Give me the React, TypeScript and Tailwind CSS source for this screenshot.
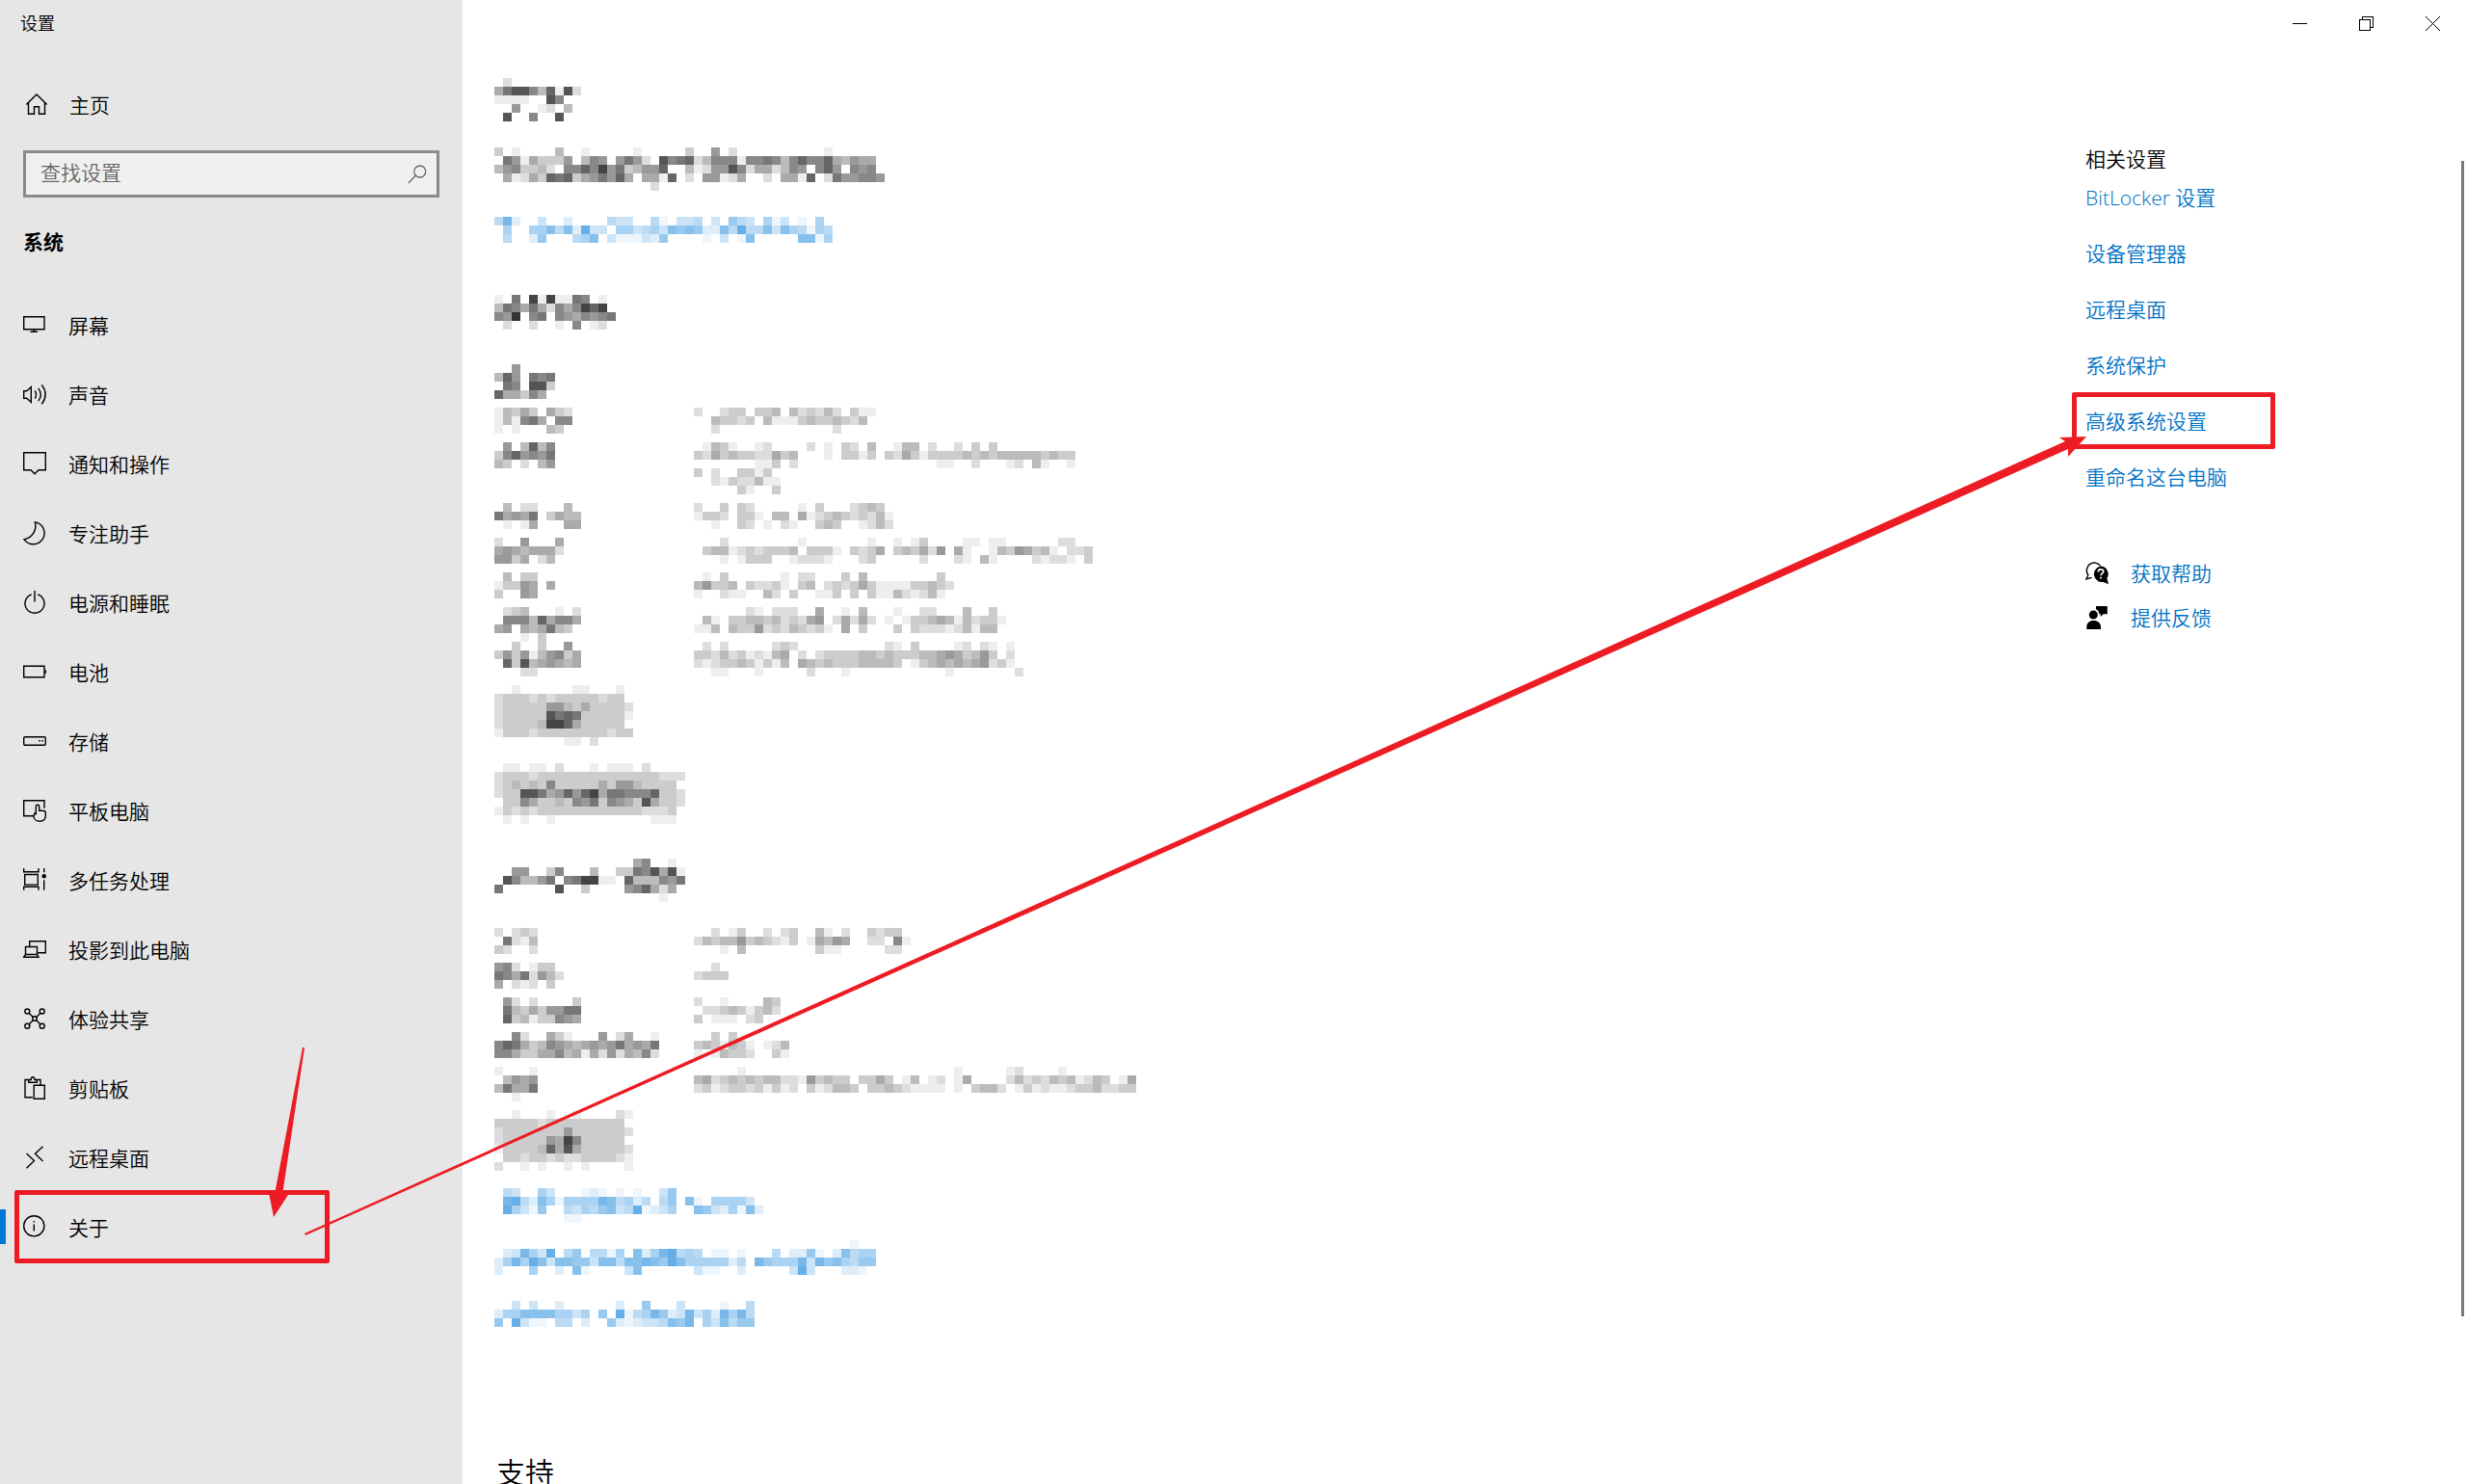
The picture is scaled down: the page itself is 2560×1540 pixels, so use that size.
import React from "react";

const CELL = 9;

type Rows = string[];

/* Pixelated stand-in for hidden text: each hex digit is the darkness of one cell. */
function Mosaic({ rows, tone = "gray" }: { rows: Rows; tone?: "gray" | "blue" }) {
  const cols = Math.max(...rows.map((r) => r.length));
  return (
    <svg
      role="img"
      aria-label="已隐藏"
      width={cols * CELL}
      height={rows.length * CELL}
      shapeRendering="crispEdges"
      className={tone === "blue" ? "block shrink-0 fill-[#0078d7]" : "block shrink-0 fill-black"}
    >
      {rows.map((row, y) =>
        row.split("").map((c, x) =>
          c === "0" ? null : (
            <rect key={`${x}-${y}`} x={x * CELL} y={y * CELL} width={CELL} height={CELL} opacity={parseInt(c, 16) / 15} />
          ),
        ),
      )}
    </svg>
  );
}

const pageTitle: Rows = ["02", "58aa7491a2", "111100a7", "006001204", "0a00700a"];
const summary: Rows = [
  "301000040010000010000030060200000000001",
  "08615333604760686" + "20a" + "7892477717" + "7874797795" + "4655",
  "46733420779" + "7b6834669" + "0041266a72" + "5524760796" + "0767",
  "051253989356869505519020661250020551902866776",
  "0000000000000000002",
];
const summaryLink: Rows = [
  "48200300200004330041033403064305130105",
  "050055747293305534537676227494473754154",
  "040026000457031113260000103017000007715",
];
const specTitle: Rows = ["1080b1b118701", "4875852757b9b", "76c07807657678", "0200200107012"];
const deviceTitle: Rows = ["006", "4960878", "0870aa3", "955375"];

const deviceRows: { label: Rows; value: Rows }[] = [
  {
    label: ["143530532", "141785077", "10100043"],
    value: ["200233033404232420311", "00433230411134334324", "00200000000000002"],
  },
  {
    label: ["0604947", "3796768", "4302046"],
    value: [
      "01431001200002010320400144020020303",
      "32534332253400010331303253133334343444443433",
      "00000001130200000000000000001100200012041001",
      "302003313",
      "0021322411",
      "0000031003",
    ],
  },
  {
    label: ["040220004", "8565803544", "0101500055"],
    value: ["2003032000001030002343", "13320331044051234323241", "00100320102100343001242"],
  },
  {
    label: ["20060005", "56545552", "6635024"],
    value: [
      "00020000000010000000100101300001101100000022",
      "0344123233340333103235034352605100143653410223",
      "0001013330012221000230000020002104100002122103",
    ],
  },
  {
    label: ["04033", "1336505", "30065"],
    value: ["01030000001022000304000000003", "463340322310340232353111133432", "10021100420300113030311421241"],
  },
  {
    label: ["0234000102", "0777495775", "560545843", "000103"],
    value: ["00000021022200500104000100220004003", "041033443423256025252010133454142331", "11404336232432310503000303222124144"],
  },
  {
    label: ["003003006", "3636146735", "093a456545", "00022"],
    value: [
      "0202000002320000000000210300001202101",
      "3324231214502023333443433344565346302",
      "2123343131405434333444430134545456231",
      "00110001000002000100000000000100000002",
    ],
  },
];

const copyButton: Rows = [
  "001000000110001",
  "233323233333233",
  "2333336643533332",
  "233333a898333331",
  "233334bb9533333",
  "1333233333333233",
  "000000001102",
];
const renameButton: Rows = [
  "011011020001011102",
  "2333233333333333333222",
  "234343733333536643333",
  "233aa856969b5887779332",
  "03375334376837653a5332",
  "132323333333333332223",
  "010100100000000000111",
];
const windowsTitle: Rows = [
  "000000000000000057001",
  "00660037000400338" + "7a5a1",
  "0a74468078bb1109444768",
  "8000000a0030000679525",
  "0000000000000000000100",
];

const windowsRows: { label: Rows; value: Rows }[] = [
  {
    label: ["20232", "08214", "32002"],
    value: ["002013002023004102003233", "2434463432130154650022071", "000104000000003110000022"],
  },
  { label: ["6720133", "87582642", "5021203"], value: ["002", "2333"] },
  {
    label: ["0620200003", "0843536688", "0934133765"],
    value: ["2001000043", "0223431342", "30111023"],
  },
  {
    label: ["0072005310006025001", "7985347654565685658", "7753355745152625472"],
    value: ["00303", "34314310124", "10143320031"],
  },
  {
    label: ["10001", "04656", "48558", "001"],
    value: [
      "0000010000000000000000000000001000001200001",
      "452343434422163433033530140120150000242324341243015",
      "231233231312031244303343211110103442013121123342233",
    ],
  },
];

const copyButton2: Rows = [
  "0010001001000021",
  "333332333333333",
  "2333333363333332",
  "23333365b733333",
  "13333495a5333332",
  "0332332322333321",
  "2001010010100001",
];

const footerLinks: Rows[] = [
  ["043005300012101010036", "089427515555874524046071055553", "0953160043546734912350076325172", "0000000011"],
  [
    "000000000000000000000000000000000000000001",
    "02385390460441507258945401101000402261027455",
    "25859737766377477876975555524086555838675466",
    "20005002071000037000000311002000003930002210",
  ],
  ["003030020000002006000300001004", "255777755350609145862383528584", "609311044020062123347680537466"],
];
const footerLinkSpacing = ["mt-[18px]", "mt-[18px]", "mt-[27px]"];

function Glyph({ children }: { children: React.ReactNode }) {
  return (
    <svg width="24" height="24" viewBox="0 0 24 24" fill="none" stroke="currentColor" strokeWidth="1.4" className="block shrink-0 overflow-visible" aria-hidden="true">
      {children}
    </svg>
  );
}

const navItems: { label: string; icon: React.ReactNode }[] = [
  { label: "屏幕", icon: <path d="M.7 3.7H22v13H.7zM11.3 16.7v2.6M7.5 19.3h7.5" /> },
  {
    label: "声音",
    icon: <path d="M.7 8.7h3L8.3 4.5v16L3.7 16.3h-3zM12.2 8.5q2.8 4 0 8M15.8 5.8q5 6.7 0 13.4M19.3 2.3q7.6 10 0 20" />,
  },
  { label: "通知和操作", icon: <path d="M.7.7h22.6v18H16l-4 4-4-4H.7z" /> },
  { label: "专注助手", icon: <path d="M12.3.9A11.5 11.5 0 1 1 1 18.6 14 14 0 0 0 12.3.9z" /> },
  { label: "电源和睡眠", icon: <path d="M12 0v11.5M8.8 3.8a10 10 0 1 0 6.4 0" /> },
  {
    label: "电池",
    icon: (
      <>
        <path d="M.7 6.3H22v11.4H.7z" />
        <path d="M22.5 10.3H24v3.4h-1.500z" fill="currentColor" stroke="none" />
      </>
    ),
  },
  {
    label: "存储",
    icon: (
      <>
        <rect x=".7" y="7.700" width="22.6" height="8.600" rx="1.2" />
        <path d="M16.300 11h1.700v1.500h-1.700zM19.300 11H21v1.500h-1.700z" fill="currentColor" stroke="none" />
      </>
    ),
  },
  {
    label: "平板电脑",
    icon: (
      <path d="M11 17.700H.7v-16H22v8M13.300 16.500V7.500q0-1.300 1.700-1.300t1.700 1.300v4.800q6.600-.5 6.600 1.700v3.500c0 3.500-2.300 5.800-6 5.800s-6.300-2.300-6.300-5.300q0-2.800 2.300-3.500" />
    ),
  },
  {
    label: "多任务处理",
    icon: (
      <>
        <path d="M.7 0v3.700H16V0M1.700 6.500H15.300v10.600H1.700zM.7 22.800v-3.500H16v3.500M21.700 0v4.300M21.700 12.300v10.500" />
        <circle cx="21.700" cy="8.300" r="2.200" fill="currentColor" stroke="none" />
      </>
    ),
  },
  {
    label: "投影到此电脑",
    icon: <path d="M6.700 9V3.700h16.600V15.700H15M2.500 17.500V9.500H14.500v8M2.500 17.500L.7 20.300H16l-1.500-2.800z" />,
  },
  {
    label: "体验共享",
    icon: (
      <>
        <circle cx="4.300" cy="4.500" r="2.500" />
        <circle cx="19.700" cy="4.500" r="2.500" />
        <circle cx="12" cy="12" r="2.300" />
        <circle cx="4.300" cy="19.700" r="2.500" />
        <circle cx="19.700" cy="19.700" r="2.500" />
        <path d="M6 6.200l4.300 4.200M18 6.200l-4.300 4.200M6 18l4.300-4.300M18 18l-4.300-4.300" />
      </>
    ),
  },
  {
    label: "剪贴板",
    icon: <path d="M9.800 21.800H2V3.500h3.800M14.300 3.500h3.700V9M5.800 6.300V3.500h2.500q0-2.800 1.800-2.800t1.800 2.800h2.400v2.800zM11.200 9.300H22.300V23.300H11.200z" />,
  },
  { label: "远程桌面", icon: <path d="M20.500.7l-8 7.600 8 7.600M3.500 7.900l8 7.600-8 7.800" /> },
  {
    label: "关于",
    icon: (
      <>
        <circle cx="11.300" cy="11.300" r="10.600" />
        <path d="M11.300 9.500v7M11.300 6v1.600" />
      </>
    ),
  },
];

const relatedLinks = ["BitLocker 设置", "设备管理器", "远程桌面", "系统保护", "高级系统设置", "重命名这台电脑"];

function DetailList({ rows }: { rows: { label: Rows; value: Rows }[] }) {
  return (
    <dl>
      {rows.map((row, i) => (
        <div key={i} className={row.value.length > 4 ? "flex h-[63px]" : "flex h-9"}>
          <dt className="w-[207px] shrink-0">
            <Mosaic rows={row.label} />
          </dt>
          <dd>
            <Mosaic rows={row.value} />
          </dd>
        </div>
      ))}
    </dl>
  );
}

function Sidebar() {
  return (
    <aside className="w-[480px] shrink-0 bg-[#e6e6e6]">
      <div className="flex h-12 items-center pl-[21px] text-lg">设置</div>
      <a href="#home" className="mt-9 flex h-[52px] items-center gap-[22px] pl-[26px]">
        <Glyph>
          <path d="M1.300 10.500L12 0l10.700 10.500M3.500 8.500V20.300H9.500v-7.600h5v7.600h6V8.500" />
        </Glyph>
        主页
      </a>
      <div className="mx-6 mt-5 flex h-[49px] items-center border-[3px] border-[#8a8a8a] bg-[#f0f0f0] pr-2.5 pl-[15px]">
        <input
          type="text"
          aria-label="查找设置"
          placeholder="查找设置"
          className="min-w-0 flex-1 bg-transparent pb-0.5 outline-none placeholder:text-[#666]"
        />
        <button type="button" aria-label="搜索" className="text-[#666]">
          <svg width="20" height="20" viewBox="0 0 20 20" fill="none" stroke="currentColor" strokeWidth="1.300" className="block">
            <circle cx="12.700" cy="7" r="6" />
            <path d="M8.300 11.300L.7 19" />
          </svg>
        </button>
      </div>
      <h2 className="mt-7 pl-6 leading-9 font-bold">系统</h2>
      <nav className="mt-8">
        <ul>
          {navItems.map((item, i) => {
            const active = i === navItems.length - 1;
            return (
              <li key={item.label} className="relative">
                <a href={`#nav-${i}`} aria-current={active ? "page" : undefined} className="flex h-[72px] items-center gap-[23px] pl-6">
                  <Glyph>{item.icon}</Glyph>
                  <span className="pt-[3px]">{item.label}</span>
                </a>
                {active && (
                  <>
                    <span className="absolute top-[18px] left-0 h-9 w-1.5 bg-[#0078d7]" />
                    <span className="absolute -inset-y-0.5 left-[15px] w-[327px] rounded-xs border-[5px] border-[#ed1c24]" />
                  </>
                )}
              </li>
            );
          })}
        </ul>
      </nav>
    </aside>
  );
}

function WindowControls() {
  const button = "flex h-12 w-[69px] items-center justify-center";
  return (
    <div className="flex justify-end pr-px">
      <button type="button" aria-label="最小化" className={button}>
        <svg width="15" height="15" stroke="black" fill="none" shapeRendering="crispEdges"><path d="M0 7.500h15" /></svg>
      </button>
      <button type="button" aria-label="还原" className={button}>
        <svg width="15" height="15" stroke="black" fill="none" shapeRendering="crispEdges"><path d="M.5 3.500h11v11H.5zM3.500 3.500v-3h11v11h-3" /></svg>
      </button>
      <button type="button" aria-label="关闭" className={button}>
        <svg width="15" height="15" stroke="black" fill="none"><path d="M0 0l15 15M15 0L0 15" /></svg>
      </button>
    </div>
  );
}

function RelatedSettings() {
  return (
    <aside className="flex w-[396px] shrink-0 justify-between pt-[102px] pr-[3px]">
      <div>
        <h2 className="leading-[30px]">相关设置</h2>
        <ul className="mt-2.5 flex flex-col gap-7 text-[#0071c5]">
          {relatedLinks.map((text) => (
            <li key={text} className="relative leading-[30px]">
              <a href={`#${text}`}>{text}</a>
              {text === "高级系统设置" && (
                <span className="absolute -top-[15px] -left-3.5 h-[59px] w-[211px] rounded-xs border-[5px] border-[#ed1c24]" />
              )}
            </li>
          ))}
        </ul>
        <ul className="mt-[70px] flex flex-col gap-4 leading-[30px] text-[#0071c5]">
          <li>
            <a href="#help" className="flex items-center gap-[23px]">
              <svg width="24" height="24" viewBox="0 0 24 24" className="block" aria-hidden="true">
                <path d="M6.500 16.400L.9 18l2-4.300A7.600 7.600 0 1 1 15.500 4.200" fill="none" stroke="black" strokeWidth="1.400" />
                <path d="M15.800 4.600a8.200 8.200 0 0 1 6.600 12.600l1.600 6-5.400-2.300A8.200 8.200 0 1 1 15.800 4.600z" fill="black" />
                <path d="M13.300 10.400q0-2.600 2.700-2.600t2.700 2.300c0 2-2.700 2-2.700 4.200M16 15.700v1.900" fill="none" stroke="white" strokeWidth="1.700" />
              </svg>
              获取帮助
            </a>
          </li>
          <li>
            <a href="#feedback" className="flex items-center gap-[23px]">
              <svg width="24" height="24" viewBox="0 0 24 24" className="block" aria-hidden="true">
                <circle cx="8.300" cy="9" r="4.500" />
                <path d="M1.300 24v-2.500c0-4 3-6.500 7.200-6.500s7.500 2.500 7.500 6.500V24zM11 0h11.800v8.300h-4L15.700 11V8.300h-1.200Q14 4.500 11 3z" />
              </svg>
              提供反馈
            </a>
          </li>
        </ul>
      </div>
      <div className="mt-[17px] h-[1199px] w-[3px] bg-[#7a7a7a]" />
    </aside>
  );
}

function Annotations() {
  return (
    <svg
      viewBox="0 0 2560 1540"
      preserveAspectRatio="none"
      className="pointer-events-none absolute inset-0 size-full fill-[#ed1c24]"
      aria-hidden="true"
    >
      <path d="M314 1087h2L293 1240l6 0L284 1263L279 1238l6 1z" />
      <path d="M316 1280L2143 458l-6-4L2165 453L2146 474v-8L317 1282z" />
    </svg>
  );
}

export default function App() {
  return (
    <div className="relative flex h-screen overflow-hidden bg-white font-['Open_Sans','Noto_Sans_CJK_SC',sans-serif] text-[21px] font-[350] text-black">
      <Sidebar />
      <div className="flex min-w-0 flex-1 flex-col">
        <WindowControls />
        <div className="flex min-h-0 flex-1">
          <main className="min-w-0 flex-1 overflow-hidden pt-[33px] pl-[33px]">
            <h1><Mosaic rows={pageTitle} /></h1>
            <div className="mt-[27px]"><Mosaic rows={summary} /></div>
            <a href="#security" className="mt-[27px] block"><Mosaic rows={summaryLink} tone="blue" /></a>
            <h2 className="mt-[54px]"><Mosaic rows={specTitle} /></h2>
            <h3 className="mt-9 mb-[9px]"><Mosaic rows={deviceTitle} /></h3>
            <DetailList rows={deviceRows} />
            <button type="button" className="mt-[9px] block"><Mosaic rows={copyButton} /></button>
            <button type="button" className="mt-[18px] block"><Mosaic rows={renameButton} /></button>
            <h2 className="mt-9 mb-[27px]"><Mosaic rows={windowsTitle} /></h2>
            <DetailList rows={windowsRows} />
            <button type="button" className="mt-[9px] block"><Mosaic rows={copyButton2} /></button>
            {footerLinks.map((rows, i) => (
              <a key={i} href={`#more-${i}`} className={`block ${footerLinkSpacing[i]}`}>
                <Mosaic rows={rows} tone="blue" />
              </a>
            ))}
            <h2 className="mt-[133px] pl-0.5 text-3xl leading-9 font-[350]">支持</h2>
          </main>
          <RelatedSettings />
        </div>
      </div>
      <Annotations />
    </div>
  );
}
